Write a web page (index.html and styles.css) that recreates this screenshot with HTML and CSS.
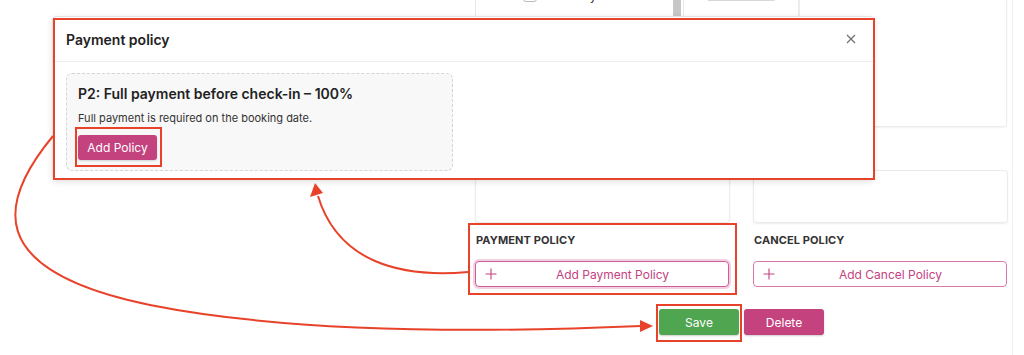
FILE: index.html
```html
<!DOCTYPE html>
<html lang="en">
<head>
<meta charset="utf-8">
<title>Payment policy</title>
<link rel="stylesheet" href="styles.css">
</head>
<body>
<div class="page">
  <div class="content">
    <div class="top-row">
      <div class="list-panel">
        <div class="list">
          <label class="day"><span class="cb"></span><span class="day-name">Sunday</span></label>
        </div>
        <div class="scrollbar"></div>
      </div>
      <div class="mid-panel"><div class="mini-btn"></div></div>
      <div class="top-card"></div>
    </div>
    <div class="cards-row">
      <div class="card"></div>
      <div class="card"></div>
    </div>
    <div class="policy-row">
      <div class="policy">
        <div class="policy-label">PAYMENT POLICY</div>
        <button class="add-btn focused"><svg class="plus" width="12" height="12" viewBox="0 0 12 12"><path d="M6 0.5V11.5M0.5 6H11.5" stroke="#c4427f" stroke-width="1.1" fill="none"/></svg><span class="add-text">Add Payment Policy</span></button>
      </div>
      <div class="policy">
        <div class="policy-label">CANCEL POLICY</div>
        <button class="add-btn"><svg class="plus" width="12" height="12" viewBox="0 0 12 12"><path d="M6 0.5V11.5M0.5 6H11.5" stroke="#c4427f" stroke-width="1.1" fill="none"/></svg><span class="add-text">Add Cancel Policy</span></button>
      </div>
    </div>
    <div class="actions">
      <button class="btn btn-save">Save</button>
      <button class="btn btn-delete">Delete</button>
    </div>
  </div>

  <div class="modal">
    <div class="modal-header">
      <div class="modal-title">Payment policy</div>
      <svg class="close" width="10" height="10" viewBox="0 0 10 10"><path d="M1 1L9 9M9 1L1 9" stroke="#6f6f6f" stroke-width="1.2" fill="none"/></svg>
    </div>
    <div class="modal-body">
      <div class="policy-card">
        <div class="policy-title">P2: Full payment before check-in – 100%</div>
        <div class="policy-desc">Full payment is required on the booking date.</div>
        <button class="btn btn-policy">Add Policy</button>
      </div>
    </div>
  </div>

  <svg class="annotations" width="1024" height="355" viewBox="0 0 1024 355">
    <g fill="none" stroke="#e8432a" stroke-width="2">
      <rect x="54" y="19" width="820" height="160"/>
      <rect x="76" y="128" width="85" height="38"/>
      <rect x="469" y="224" width="267" height="70"/>
      <rect x="657" y="305" width="84" height="36"/>
      <path d="M468,272 C 400,278 338,262 318,196"/>
      <path d="M53,136 C 0,200 -20,270 150,305 C 300,335 500,332 641,326"/>
    </g>
    <g fill="#e8432a">
      <polygon points="315,183 310,197 323,193"/>
      <polygon points="640,320 653,326 640,332"/>
    </g>
  </svg>
</div>
</body>
</html>
```

FILE: styles.css
```css
* { box-sizing: border-box; }
html, body { margin: 0; padding: 0; background: #fff; }
body {
  font-family: Inter, "Noto Sans", "Liberation Sans", sans-serif;
  color: #222;
  width: 1024px;
  height: 355px;
  overflow: hidden;
}
.page {
  position: relative;
  width: 1024px;
  height: 355px;
}
.content {
  width: 1013px;
  height: 355px;
  padding-left: 475px;
  border-right: 1px solid #f1f1f1;
  display: flex;
  flex-direction: column;
}
.top-row {
  display: flex;
  height: 127px;
}
.list-panel {
  width: 209px;
  border-left: 1px solid #e8e8e8;
  border-right: 1px solid #e8e8e8;
  display: flex;
  overflow: hidden;
}
.list {
  flex: 1;
  margin-top: -13px;
  padding-left: 47px;
}
.day {
  display: flex;
  align-items: center;
  gap: 17px;
  font-size: 12px;
  color: #333;
  height: 16px;
}
.cb {
  width: 14px;
  height: 14px;
  border: 1px solid #b9b9b9;
  border-radius: 3px;
  background: #fff;
}
.scrollbar {
  width: 8px;
  margin-right: 2px;
  background: #c7c7c7;
  height: 100%;
}
.mid-panel {
  width: 115px;
  border-right: 1px solid #ececec;
  padding-left: 23px;
}
.mini-btn {
  width: 68px;
  height: 2px;
  margin-top: -1px;
  border: 1px solid #d8d8d8;
  border-top: 0;
  border-radius: 0 0 3px 3px;
}
.top-card {
  width: 208px;
  height: 127px;
  border: 1px solid #ececec;
  border-top: 0;
  border-radius: 0 0 4px 4px;
  box-shadow: 0 1px 2px rgba(0,0,0,0.06);
}
.cards-row {
  display: grid;
  grid-template-columns: 255px 255px;
  column-gap: 23px;
  margin-top: 43px;
}
.card {
  height: 53px;
  background: #fff;
  border: 1px solid #ebebeb;
  border-radius: 4px;
  box-shadow: 0 1px 2px rgba(0,0,0,0.07);
}
.policy-row {
  display: grid;
  grid-template-columns: 255px 255px;
  column-gap: 23px;
  margin-top: 7px;
}
.policy-label {
  font-size: 11px;
  font-weight: 700;
  color: #333;
  line-height: 20px;
  height: 20px;
  padding-left: 1px;
  letter-spacing: 0.1px;
}
.add-btn {
  margin-top: 11px;
  width: 254px;
  height: 26px;
  display: flex;
  align-items: center;
  padding: 0 0 0 9px;
  background: #fff;
  border: 1px solid #d978aa;
  border-radius: 4px;
  color: #c4427f;
  font-family: inherit;
  font-size: 12px;
}
.add-btn.focused {
  border-color: #cf5b98;
  box-shadow: 0 0 0 2px rgba(214, 120, 170, 0.35);
}
.plus {
  flex: none;
}
.add-text {
  flex: 1;
  text-align: center;
}
.actions {
  display: flex;
  justify-content: center;
  gap: 5px;
  margin-top: 22px;
  width: 533px;
}
.btn {
  border: 0;
  border-radius: 3px;
  color: #fff;
  font-family: inherit;
  font-size: 12px;
  height: 26px;
  cursor: pointer;
}
.btn-save {
  width: 80px;
  background: #50a551;
  box-shadow: 0 1px 2px rgba(0,0,0,0.2);
}
.btn-delete {
  width: 80px;
  background: #c4437f;
  box-shadow: 0 1px 2px rgba(0,0,0,0.2);
}

.modal {
  position: absolute;
  left: 52px;
  top: 16px;
  width: 822px;
  height: 164px;
  background: #fff;
  border: 1px solid #e2e2e2;
  border-radius: 4px;
  box-shadow: 0 2px 6px rgba(0,0,0,0.12);
}
.modal-header {
  height: 45px;
  border-bottom: 1px solid #ececec;
  display: flex;
  align-items: center;
  justify-content: space-between;
  padding: 0 17px 0 13px;
}
.modal-title {
  font-size: 14px;
  font-weight: 600;
  color: #222;
}
.modal-body {
  padding: 11px 13px;
}
.policy-card {
  width: 387px;
  height: 98px;
  background: #f8f8f8;
  border: 1px dashed #d5d5d5;
  border-radius: 6px;
  padding: 11px 11px;
}
.policy-title {
  font-size: 14px;
  font-weight: 600;
  color: #222;
  line-height: 18px;
}
.policy-desc {
  margin-top: 8px;
  font-size: 11px;
  color: #333;
  line-height: 14px;
}
.btn-policy {
  margin-top: 10px;
  width: 79px;
  height: 25px;
  background: #c4437f;
  box-shadow: 0 1px 2px rgba(0,0,0,0.15);
}

.annotations {
  position: absolute;
  left: 0;
  top: 0;
  pointer-events: none;
}
```
